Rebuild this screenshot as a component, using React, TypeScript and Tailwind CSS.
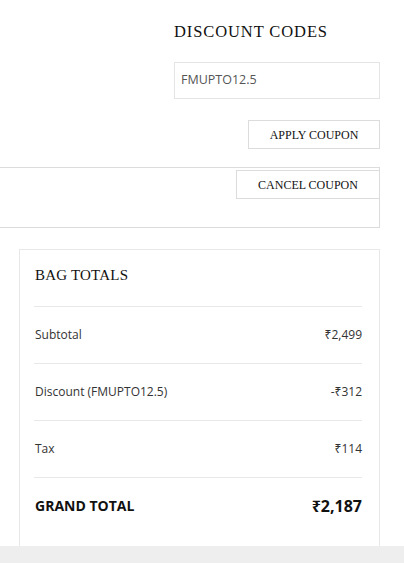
export default function App() {
  const serif = { fontFamily: '"Liberation Serif", "Times New Roman", serif' }

  const rows = [
    { label: 'Subtotal', value: '₹2,499' },
    { label: 'Discount (FMUPTO12.5)', value: '-₹312' },
    { label: 'Tax', value: '₹114' },
  ]

  return (
    <div
      className="flex h-[563px] w-[404px] flex-col overflow-hidden bg-white"
      style={{ fontFamily: '"Open Sans", "Noto Sans", sans-serif' }}
    >
      <div className="flex-1 overflow-hidden pr-[24px]">
        {/* discount codes */}
        <div className="flex flex-col items-end pt-[22px]">
          <div className="w-[206px]">
            <h2 className="text-[16.5px] leading-[20px] tracking-[0.9px] text-[#111]" style={serif}>
              DISCOUNT CODES
            </h2>
            <div className="mt-[20px] flex h-[37px] items-center border border-[#e4e4e4] px-[6px] text-[12.5px] text-[#555]">
              FMUPTO12.5
            </div>
          </div>
          <button
            className="mt-[21px] h-[29px] w-[132px] border border-[#dcdcdc] bg-white text-[12px] text-[#111]"
            style={serif}
          >
            APPLY COUPON
          </button>
        </div>

        {/* applied coupon box */}
        <div className="mt-[18px] flex h-[61px] w-[380px] items-start justify-end border-y border-r border-[#dcdcdc] pt-[2px]">
          <button
            className="-mr-px h-[29px] w-[144px] border border-[#dcdcdc] bg-white text-[12px] text-[#111]"
            style={serif}
          >
            CANCEL COUPON
          </button>
        </div>

        {/* bag totals */}
        <div className="ml-[19px] mt-[21px] border border-[#e8e8e8] pl-[14px] pr-[17px] pt-[15px] pb-[20px]">
          <h3 className="mb-[21px] pl-[1px] text-[15px] leading-[20px] tracking-[0.2px] text-[#111]" style={serif}>
            BAG TOTALS
          </h3>
          {rows.map((r) => (
            <div
              key={r.label}
              className="flex items-center justify-between border-t border-[#e8e8e8] py-[20px] pl-[1px] text-[12px] leading-[16px] text-[#333]"
            >
              <span>{r.label}</span>
              <span>{r.value}</span>
            </div>
          ))}
          <div className="flex items-center justify-between border-t border-[#e8e8e8] py-[18px] pl-[1px] text-[#111]">
            <span className="text-[14px] font-bold leading-[20px]">GRAND TOTAL</span>
            <span className="text-[16px] font-bold leading-[20px]">₹2,187</span>
          </div>
        </div>
      </div>
      <div className="h-[17px] shrink-0 bg-[#eeeeee]" />
    </div>
  )
}
